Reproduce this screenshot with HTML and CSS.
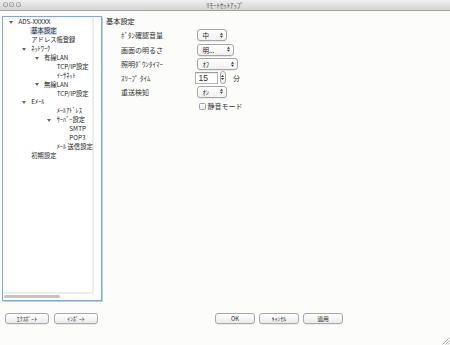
FILE: index.html
```html
<!DOCTYPE html>
<html lang="ja">
<head>
<meta charset="utf-8">
<title>ﾘﾓｰﾄｾｯﾄｱｯﾌﾟ</title>
<link rel="stylesheet" href="styles.css">
</head>
<body>
<div class="window">
  <div class="titlebar">
    <div class="lights"><span class="light"></span><span class="light"></span><span class="light"></span></div>
    <div class="title">ﾘﾓｰﾄｾｯﾄｱｯﾌﾟ</div>
    <div></div>
  </div>
  <div class="main">
    <div class="tree-box">
      <div class="tree-view">
        <ul class="tree">
          <li class="node l0"><span class="twisty open"></span><span>ADS-XXXXX</span></li>
          <li class="node l1"><span class="twisty"></span><span class="sel">基本設定</span></li>
          <li class="node l1"><span class="twisty"></span><span>アドレス帳登録</span></li>
          <li class="node l1"><span class="twisty open"></span><span>ﾈｯﾄﾜｰｸ</span></li>
          <li class="node l2"><span class="twisty open"></span><span>有線LAN</span></li>
          <li class="node l3"><span class="twisty"></span><span>TCP/IP設定</span></li>
          <li class="node l3"><span class="twisty"></span><span>ｲｰｻﾈｯﾄ</span></li>
          <li class="node l2"><span class="twisty open"></span><span>無線LAN</span></li>
          <li class="node l3"><span class="twisty"></span><span>TCP/IP設定</span></li>
          <li class="node l1"><span class="twisty open"></span><span>Eﾒｰﾙ</span></li>
          <li class="node l3"><span class="twisty"></span><span>ﾒｰﾙｱﾄﾞﾚｽ</span></li>
          <li class="node l2b"><span class="twisty open"></span><span>ｻｰﾊﾞｰ設定</span></li>
          <li class="node l4"><span class="twisty"></span><span>SMTP</span></li>
          <li class="node l4"><span class="twisty"></span><span>POP3</span></li>
          <li class="node l3"><span class="twisty"></span><span>ﾒｰﾙ 送信設定</span></li>
          <li class="node l1"><span class="twisty"></span><span>初期設定</span></li>
        </ul>
      </div>
      <div class="hscroll"><div class="thumb"></div></div>
    </div>
    <div class="pane">
      <div class="pane-title">基本設定</div>
      <div class="form">
        <div class="label">ﾎﾞﾀﾝ確認音量</div>
        <div class="popup w30"><span>中</span><svg class="updown" viewBox="0 0 4 8" width="3" height="6.5"><path d="M0 3.2L2 0.6 4 3.2Z M0 4.8L2 7.4 4 4.8Z" fill="#333"/></svg></div>
        <div class="label">画面の明るさ</div>
        <div class="popup w37"><span>明...</span><svg class="updown" viewBox="0 0 4 8" width="3" height="6.5"><path d="M0 3.2L2 0.6 4 3.2Z M0 4.8L2 7.4 4 4.8Z" fill="#333"/></svg></div>
        <div class="label">照明ﾀﾞｳﾝﾀｲﾏｰ</div>
        <div class="popup w41"><span>ｵﾌ</span><svg class="updown" viewBox="0 0 4 8" width="3" height="6.5"><path d="M0 3.2L2 0.6 4 3.2Z M0 4.8L2 7.4 4 4.8Z" fill="#333"/></svg></div>
        <div class="label">ｽﾘｰﾌﾟ ﾀｲﾑ</div>
        <div class="field">
          <div class="textbox">15</div>
          <div class="stepper"><svg class="updown" viewBox="0 0 4 8" width="3" height="7"><path d="M0 3.2L2 0.6 4 3.2Z M0 4.8L2 7.4 4 4.8Z" fill="#333"/></svg></div>
          <span class="unit">分</span>
        </div>
        <div class="label">重送検知</div>
        <div class="popup w30"><span>ｵﾝ</span><svg class="updown" viewBox="0 0 4 8" width="3" height="6.5"><path d="M0 3.2L2 0.6 4 3.2Z M0 4.8L2 7.4 4 4.8Z" fill="#333"/></svg></div>
        <div class="label"></div>
        <div class="check"><span class="box"></span><span class="check-label">静音モード</span></div>
      </div>
    </div>
  </div>
  <div class="footer">
    <div class="btn-group">
      <button class="btn w44">ｴｸｽﾎﾟｰﾄ</button>
      <button class="btn w44">ｲﾝﾎﾟｰﾄ</button>
    </div>
    <div class="btn-group right">
      <button class="btn w40">OK</button>
      <button class="btn w40">ｷｬﾝｾﾙ</button>
      <button class="btn w40">適用</button>
    </div>
  </div>
  <svg class="grip" viewBox="0 0 9 9" width="9" height="9"><path d="M8.5 1.5L1.5 8.5 M8.5 4.5L4.5 8.5 M8.5 7L7 8.5" stroke="#a0a0a0" stroke-width="0.8" fill="none"/></svg>
</div>
</body>
</html>
```

FILE: styles.css
```css
html, body {
  margin: 0;
  padding: 0;
  background: #fcfcfb;
}
body {
  font-family: "Noto Sans CJK JP", "Liberation Sans", sans-serif;
  color: #222;
}
.window {
  position: relative;
  width: 450px;
  height: 345px;
  display: flex;
  flex-direction: column;
  background: #fcfcfb;
  overflow: hidden;
}
.titlebar {
  height: 10px;
  border-bottom: 1px solid #a3a3a3;
  background: linear-gradient(#efefef, #d4d4d4);
  display: grid;
  grid-template-columns: 1fr auto 1fr;
  align-items: start;
}
.lights {
  display: flex;
  gap: 1.7px;
  padding-left: 2.5px;
  margin-top: 1.5px;
}
.light {
  width: 5px;
  height: 5px;
  border-radius: 50%;
  background: linear-gradient(#e8e8e8, #c6c6c6);
  box-shadow: inset 0 0 0 0.6px #9a9a9a;
}
.title {
  font-size: 6.8px;
  line-height: 11px;
  color: #555;
}
.main {
  display: flex;
  align-items: flex-start;
  padding-top: 5px;
}
.tree-box {
  margin-left: 2px;
  width: 100px;
  height: 285px;
  box-sizing: border-box;
  border: 1px solid #7fa8de;
  box-shadow: 0 0 1px 0.5px #b8d0ef;
  background: #fff;
  display: flex;
  flex-direction: column;
}
.tree-view {
  width: 91px;
  height: 277px;
  box-sizing: border-box;
  border-right: 2px solid #ededed;
  border-bottom: 2px solid #ededed;
  padding-top: 1px;
}
.hscroll {
  padding: 0.5px 0 0 1px;
}
.thumb {
  width: 56px;
  height: 3.5px;
  border-radius: 2px;
  background: #c3c3c3;
}
.tree {
  list-style: none;
  margin: 0;
  padding: 0;
}
.node {
  display: flex;
  align-items: center;
  height: 8.9px;
  font-size: 6.3px;
  line-height: 8px;
  white-space: nowrap;
  color: #262626;
}
.twisty {
  width: 10px;
  flex: none;
  display: flex;
  align-items: center;
  padding-left: 1px;
  box-sizing: border-box;
}
.twisty.open::before {
  content: "";
  width: 0;
  height: 0;
  border-left: 2.3px solid transparent;
  border-right: 2.3px solid transparent;
  border-top: 3.6px solid #666;
}
.l0 { padding-left: 5.4px; }
.l1 { padding-left: 18.3px; }
.l2 { padding-left: 31px; }
.l2b { padding-left: 35px; }
.l3 { padding-left: 43.7px; }
.l4 { padding-left: 56.3px; }
.l2b .twisty { width: 18.7px; padding-left: 9px; }
.sel {
  background: #d3e0f2;
  padding: 0 1px;
  margin-left: -1px;
}
.pane {
  margin-left: 4px;
}
.pane-title {
  font-size: 7.2px;
  line-height: 11px;
  color: #222;
}
.form {
  display: grid;
  grid-template-columns: 74px auto;
  grid-template-rows: 14px 15px 14px 13px 15px 14px;
  align-items: center;
  justify-items: start;
  margin-top: 1px;
  padding-left: 15px;
}
.label {
  font-size: 7px;
  color: #333;
  white-space: nowrap;
}
.popup {
  display: flex;
  align-items: center;
  justify-content: space-between;
  height: 12px;
  box-sizing: border-box;
  border: 1px solid #a6a6a6;
  border-radius: 3px;
  background: linear-gradient(#ffffff, #f1f1f1);
  box-shadow: 0 0.5px 0.5px rgba(0, 0, 0, 0.15);
  padding: 0 3px 0 4.5px;
  margin-left: 2px;
  font-size: 6.5px;
  color: #222;
}
.w30 { width: 30px; }
.w37 { width: 37px; }
.w41 { width: 41px; }
.w40 { width: 40px; }
.w44 { width: 44px; }
.updown {
  display: block;
}
.field {
  display: flex;
  align-items: center;
}
.textbox {
  width: 23px;
  height: 12px;
  box-sizing: border-box;
  border: 1px solid #b3b3b3;
  border-top-color: #999;
  background: #fff;
  box-shadow: inset 0 1px 1px rgba(0, 0, 0, 0.08);
  font-family: "Liberation Sans", sans-serif;
  font-size: 8.5px;
  line-height: 10px;
  padding-left: 2.5px;
  color: #333;
}
.stepper {
  width: 6.5px;
  height: 13px;
  margin-left: 1.5px;
  box-sizing: border-box;
  border: 1px solid #a6a6a6;
  border-radius: 3px;
  background: linear-gradient(#ffffff, #f0f0f0);
  display: flex;
  align-items: center;
  justify-content: center;
}
.unit {
  margin-left: 7px;
  font-size: 7px;
  color: #333;
}
.check {
  display: flex;
  align-items: center;
  margin-left: 3.5px;
}
.box {
  width: 7px;
  height: 7px;
  box-sizing: border-box;
  border: 1px solid #a3a3a3;
  border-radius: 1.5px;
  background: linear-gradient(#ffffff, #ececec);
}
.check-label {
  margin-left: 2px;
  font-size: 7px;
  color: #333;
}
.footer {
  display: flex;
  padding-left: 5px;
  margin-top: 12px;
}
.btn-group {
  display: flex;
  gap: 5px;
}
.btn-group.right {
  gap: 4px;
  margin-left: 117px;
}
.btn {
  height: 11px;
  box-sizing: border-box;
  padding: 0;
  margin: 0;
  border: 1px solid #a9a9a9;
  border-radius: 3px;
  background: linear-gradient(#ffffff, #ebebeb);
  box-shadow: 0 0.5px 0.5px rgba(0, 0, 0, 0.12);
  font-family: "Noto Sans CJK JP", "Liberation Sans", sans-serif;
  font-size: 5.8px;
  line-height: 9px;
  color: #333;
  display: flex;
  align-items: center;
  justify-content: center;
}
.grip {
  position: absolute;
  right: 0;
  bottom: 0;
}
```
